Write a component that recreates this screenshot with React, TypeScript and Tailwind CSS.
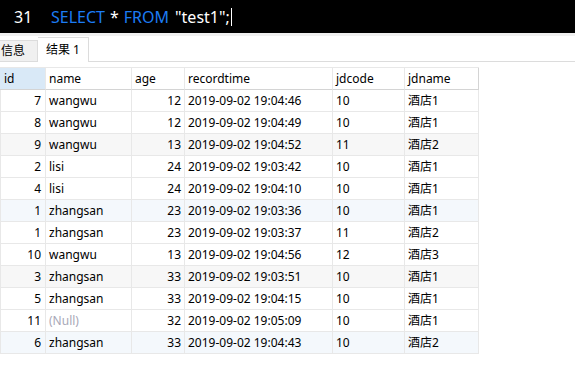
const rows: [number, string | null, number, string, number, string][] = [
  [7, 'wangwu', 12, '2019-09-02 19:04:46', 10, '酒店1'],
  [8, 'wangwu', 12, '2019-09-02 19:04:49', 10, '酒店1'],
  [9, 'wangwu', 13, '2019-09-02 19:04:52', 11, '酒店2'],
  [2, 'lisi', 24, '2019-09-02 19:03:42', 10, '酒店1'],
  [4, 'lisi', 24, '2019-09-02 19:04:10', 10, '酒店1'],
  [1, 'zhangsan', 23, '2019-09-02 19:03:36', 10, '酒店1'],
  [1, 'zhangsan', 23, '2019-09-02 19:03:37', 11, '酒店2'],
  [10, 'wangwu', 13, '2019-09-02 19:04:56', 12, '酒店3'],
  [3, 'zhangsan', 33, '2019-09-02 19:03:51', 10, '酒店1'],
  [5, 'zhangsan', 33, '2019-09-02 19:04:15', 10, '酒店1'],
  [11, null, 32, '2019-09-02 19:05:09', 10, '酒店1'],
  [6, 'zhangsan', 33, '2019-09-02 19:04:43', 10, '酒店2'],
];

// stripe pattern seen in the grid: every 3rd row tinted, alternating gray / blue
function rowBg(i: number) {
  if (i % 6 === 2) return 'bg-[#f7f7f7]';
  if (i % 6 === 5) return 'bg-[#f4f8fc]';
  return 'bg-white';
}

const cell = 'h-[22px] border-r border-b border-[#e8e8e8] flex items-center overflow-hidden whitespace-nowrap';

export default function App() {
  return (
    <div
      className="w-[575px] h-[366px] bg-white overflow-hidden text-black"
      style={{ fontFamily: '"Noto Sans", "Noto Sans CJK SC", sans-serif' }}
    >
      {/* editor line */}
      <div className="h-[33px] bg-black flex items-center text-[16px] leading-none">
        <span className="w-[51px] pl-[14px] text-white">31</span>
        <span className="text-[#1c7cf4]">SELECT</span>
        <span className="text-white ml-[5px]">*</span>
        <span className="text-[#1c7cf4] ml-[5px]">FROM</span>
        <span className="text-white ml-[6px]">"test1";</span>
        <span className="w-px h-[18px] bg-white ml-px" />
      </div>
      <div className="h-[3px] bg-[#f0f0f0]" />

      {/* tabs */}
      <div className="h-[26px] flex items-end border-b border-[#dcdcdc] text-[12px]">
        <div className="w-[38px] h-[22px] bg-[#f0f0f0] border-t border-r border-[#dcdcdc] flex items-center pl-[1px] -mb-px border-b">
          信息
        </div>
        <div className="w-[51px] h-[25px] bg-white border-t border-r border-[#dcdcdc] -mb-px flex items-center pl-[8px]">
          结果 1
        </div>
      </div>

      {/* grid */}
      <div className="mt-[5px] text-[12px] w-[479px]">
        <div className="grid grid-cols-[46px_86px_53px_148px_72px_74px] border-t border-[#e8e8e8]">
          <div className={`${cell} bg-[#d9e9f7] pl-[4px] border-b-[#d4d4d4]`}>id</div>
          <div className={`${cell} pl-[3px] border-b-[#d4d4d4]`}>name</div>
          <div className={`${cell} pl-[3px] border-b-[#d4d4d4]`}>age</div>
          <div className={`${cell} pl-[3px] border-b-[#d4d4d4]`}>recordtime</div>
          <div className={`${cell} pl-[3px] border-b-[#d4d4d4]`}>jdcode</div>
          <div className={`${cell} pl-[3px] border-b-[#d4d4d4] border-r-[#d4d4d4]`}>jdname</div>
          {rows.map((r, i) => {
            const bg = rowBg(i);
            return [
              <div key={`a${i}`} className={`${cell} ${bg} justify-end pr-[4px] border-l border-l-[#e8e8e8]`}>{r[0]}</div>,
              <div key={`b${i}`} className={`${cell} ${bg} pl-[3px]`}>
                {r[1] === null ? <span className="text-[#a8a8b8]">(Null)</span> : r[1]}
              </div>,
              <div key={`c${i}`} className={`${cell} ${bg} justify-end pr-[3px]`}>{r[2]}</div>,
              <div key={`d${i}`} className={`${cell} ${bg} pl-[3px]`}>{r[3]}</div>,
              <div key={`e${i}`} className={`${cell} ${bg} pl-[3px]`}>{r[4]}</div>,
              <div key={`f${i}`} className={`${cell} ${bg} pl-[3px]`}>{r[5]}</div>,
            ];
          })}
        </div>
      </div>
    </div>
  );
}
